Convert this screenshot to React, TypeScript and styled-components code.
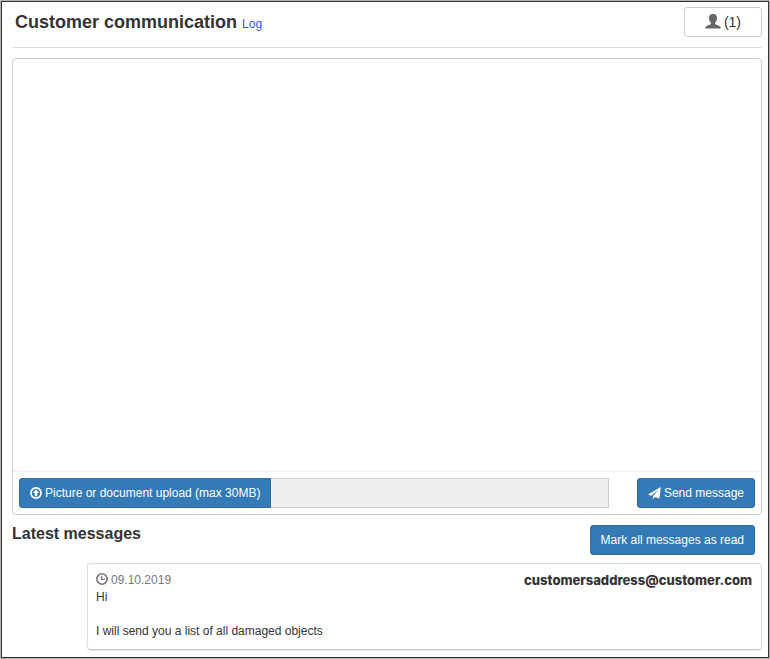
import React from "react";
import styled, { createGlobalStyle } from "styled-components";

const GlobalStyle = createGlobalStyle`
  *, *::before, *::after { box-sizing: border-box; }
  body {
    margin: 0;
    background: #fff;
    color: #333;
    font: 12px/17px "Liberation Sans", Arial, sans-serif;
  }
  button, input, textarea { font: inherit; }
`;

const OuterEdge = styled.div`
  display: flex;
  min-height: 100vh;
  border: 1px solid #b4b4b4;
`;

const Page = styled.main`
  flex: 1;
  min-width: 0;
  display: flex;
  flex-direction: column;
  padding: 5px 6px 7px 10px;
  border: 1px solid #333;
`;

const Header = styled.header`
  display: flex;
  align-items: flex-start;
  justify-content: space-between;
  padding: 0 0 10px 3px;
  border-bottom: 1px solid #ddd;
`;

const TitleGroup = styled.div`
  display: flex;
  align-items: baseline;
  gap: 5px;
  padding-top: 5px;
`;

const Title = styled.h1`
  margin: 0;
  font-size: 18px;
  line-height: 20px;
  font-weight: 700;
`;

const LogLink = styled.a`
  color: #2a5bea;
  text-decoration: none;
`;

const Button = styled.button<{ $plain?: boolean }>`
  display: inline-flex;
  flex: none;
  align-items: center;
  justify-content: center;
  gap: 3px;
  height: 30px;
  padding: 0 10px;
  border: 1px solid ${(p) => (p.$plain ? "#ccc" : "#2e6da4")};
  border-radius: 3px;
  background: ${(p) => (p.$plain ? "#fff" : "#337ab7")};
  color: ${(p) => (p.$plain ? "#333" : "#fff")};
  white-space: nowrap;
  cursor: pointer;
`;

const ParticipantsButton = styled(Button)`
  padding: 0 20px;
  font-size: 14px;
  svg { color: #666; }
`;

const Composer = styled.form`
  flex: 1;
  display: flex;
  flex-direction: column;
  margin-top: 10px;
  border: 1px solid #ccc;
  border-radius: 4px;
`;

const MessageInput = styled.textarea`
  flex: 1;
  width: 100%;
  padding: 8px;
  border: 0;
  outline: 0;
  resize: none;
  background: transparent;
`;

const ComposerBar = styled.div`
  display: flex;
  gap: 28px;
  padding: 6px;
  border-top: 1px solid #eee;
`;

const UploadGroup = styled.div`
  flex: 1;
  min-width: 0;
  display: flex;
`;

const UploadButton = styled(Button)`
  border-radius: 3px 0 0 3px;
`;

const FileName = styled.input`
  flex: 1;
  min-width: 0;
  height: 30px;
  padding: 0 8px;
  border: 1px solid #ccc;
  border-left: 0;
  border-radius: 0;
  outline: 0;
  background: #eee;
`;

const SectionHeader = styled.div`
  display: flex;
  align-items: flex-start;
  justify-content: space-between;
  padding: 10px 7px 8px 0;
`;

const SectionTitle = styled.h2`
  margin: 0;
  font-size: 16px;
  line-height: 18px;
  font-weight: 700;
`;

const Message = styled.article`
  margin-left: 75px;
  padding: 8px 9px 9px 8px;
  border: 1px solid #ddd;
  border-bottom-color: #ccc;
  border-radius: 4px;
  box-shadow: 0 1px 1px rgba(0, 0, 0, 0.12);
`;

const MessageHeader = styled.div`
  display: flex;
  align-items: flex-start;
  justify-content: space-between;
`;

const Timestamp = styled.time`
  display: flex;
  align-items: flex-start;
  gap: 3px;
  color: #777;
  svg { margin-top: 1px; }
`;

const Sender = styled.span`
  font-family: Inter, "Liberation Sans", sans-serif;
  font-size: 13px;
  font-weight: 800;
`;

const MessageText = styled.p`
  margin: 0;
  white-space: pre-line;
`;

const UserIcon = () => (
  <svg width="16" height="16" viewBox="0 0 16 16" fill="currentColor" aria-hidden="true">
    <path d="M8 0C5.4 0 4 1.5 4 3.9C4 6 4.7 7.6 5.8 8.6V9.6C5.8 10 5.6 10.3 5.2 10.5L1.6 12C.8 12.4 .4 12.9 .4 13.6V14.4H15.6V13.6C15.6 12.9 15.2 12.4 14.4 12L10.8 10.5C10.4 10.3 10.2 10 10.2 9.6V8.6C11.3 7.6 12 6 12 3.9C12 1.5 10.6 0 8 0Z" />
  </svg>
);

const UploadIcon = () => (
  <svg width="12" height="12" viewBox="0 0 12 12" aria-hidden="true">
    <circle cx="6" cy="6" r="5.1" fill="none" stroke="currentColor" strokeWidth="1.7" />
    <path d="M6 2.4L9.2 6H7.2V9.2H4.8V6H2.8Z" fill="currentColor" />
  </svg>
);

const SendIcon = () => (
  <svg width="13" height="13" viewBox="0 0 13 13" fill="currentColor" aria-hidden="true">
    <path d="M12.8 0L0 7.4L3.4 8.8L10.8 2.4L4.8 9.4V12.2L6.8 9.9L11.4 11.4Z" />
  </svg>
);

const ClockIcon = () => (
  <svg width="12" height="12" viewBox="0 0 12 12" fill="none" stroke="currentColor" aria-hidden="true">
    <circle cx="6" cy="6" r="5.2" strokeWidth="1.6" />
    <path d="M5.6 2.8V6.4H8.8" strokeWidth="1.2" />
  </svg>
);

export default function App() {
  return (
    <>
      <GlobalStyle />
      <OuterEdge>
        <Page>
          <Header>
            <TitleGroup>
              <Title>Customer communication</Title>
              <LogLink href="#log">Log</LogLink>
            </TitleGroup>
            <ParticipantsButton $plain type="button" aria-label="Participants (1)">
              <UserIcon />
              <span>(1)</span>
            </ParticipantsButton>
          </Header>
          <Composer onSubmit={(e: React.FormEvent) => e.preventDefault()}>
            <MessageInput aria-label="Message" />
            <ComposerBar>
              <UploadGroup>
                <UploadButton type="button">
                  <UploadIcon />
                  <span>Picture or document upload (max 30MB)</span>
                </UploadButton>
                <FileName type="text" readOnly aria-label="Selected file" />
              </UploadGroup>
              <Button type="submit">
                <SendIcon />
                <span>Send message</span>
              </Button>
            </ComposerBar>
          </Composer>
          <SectionHeader>
            <SectionTitle>Latest messages</SectionTitle>
            <Button type="button">Mark all messages as read</Button>
          </SectionHeader>
          <Message>
            <MessageHeader>
              <Timestamp dateTime="2019-10-09">
                <ClockIcon />
                <span>09.10.2019</span>
              </Timestamp>
              <Sender>customersaddress@customer.com</Sender>
            </MessageHeader>
            <MessageText>{"Hi\n\nI will send you a list of all damaged objects"}</MessageText>
          </Message>
        </Page>
      </OuterEdge>
    </>
  );
}
